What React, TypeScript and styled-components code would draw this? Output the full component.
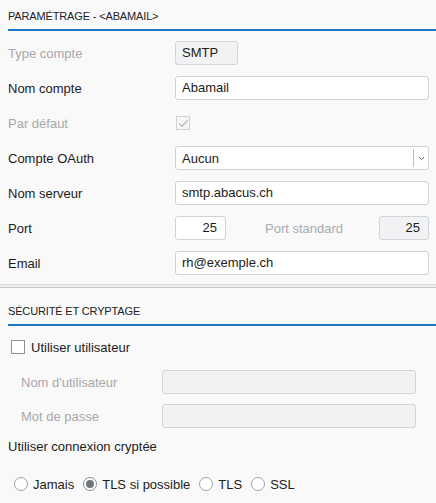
import React from "react";
import styled, { createGlobalStyle } from "styled-components";

const Global = createGlobalStyle`
  html, body { margin: 0; padding: 0; background: #f9f9f9; }
  body {
    font-family: "Liberation Sans", Arial, sans-serif;
    font-size: 13px;
    color: #1c1c1c;
  }
  * { box-sizing: border-box; }
`;

const Page = styled.div`
  width: 436px;
  height: 503px;
  overflow: hidden;
  background: #f9f9f9;
`;

const SectionHeader = styled.div<{ $top: number }>`
  margin-left: 8px;
  padding-top: ${(p) => p.$top}px;
  padding-bottom: 6px;
  height: ${(p) => p.$top + 21}px;
  line-height: 13px;
  font-size: 11px;
  letter-spacing: -0.15px;
  text-transform: uppercase;
  color: #222;
  border-bottom: 2px solid #1f76c6;
`;

const Form = styled.div`
  display: flex;
  flex-direction: column;
  gap: 11px;
  padding: 10px 7px 9px 8px;
`;

const Row = styled.div<{ $labelWidth?: number }>`
  display: grid;
  grid-template-columns: ${(p) => p.$labelWidth ?? 167}px 1fr;
  align-items: center;
  height: 24px;
`;

const Label = styled.span<{ $muted?: boolean }>`
  color: ${(p) => (p.$muted ? "#a8a8a8" : "#1c1c1c")};
  white-space: nowrap;
`;

const Field = styled.div<{ $width?: number; $disabled?: boolean; $right?: boolean }>`
  height: 24px;
  width: ${(p) => (p.$width ? `${p.$width}px` : "100%")};
  border: 1px solid ${(p) => (p.$disabled ? "#d3d5d8" : "#d2d2d2")};
  border-radius: 3px;
  background: ${(p) => (p.$disabled ? "#f1f2f3" : "#ffffff")};
  padding: 0 8px 0 6px;
  line-height: 22px;
  color: #1c1c1c;
  text-align: ${(p) => (p.$right ? "right" : "left")};
  white-space: nowrap;
  overflow: hidden;
`;

const SelectBox = styled.div`
  height: 24px;
  width: 100%;
  border: 1px solid #d2d2d2;
  border-radius: 3px;
  background: #fff;
  display: flex;
  align-items: center;
  padding-left: 6px;
`;

const SelectText = styled.span`
  flex: 1;
`;

const SelectDivider = styled.span`
  width: 1px;
  height: 18px;
  background: #bdbdbd;
`;

const SelectArrow = styled.span`
  width: 14px;
  display: flex;
  align-items: center;
  justify-content: center;
`;

const PortGroup = styled.div`
  display: flex;
  align-items: center;
`;

const PortStd = styled.span`
  color: #a6acb3;
  margin-left: 39px;
  flex: 1;
`;

const Check = styled.span<{ $disabled?: boolean }>`
  width: 14px;
  height: 14px;
  border: 1px solid ${(p) => (p.$disabled ? "#d2d2d2" : "#8c9198")};
  background: ${(p) => (p.$disabled ? "#f6f6f6" : "#ffffff")};
  display: inline-flex;
  align-items: center;
  justify-content: center;
  flex: none;
`;

const CheckCell = styled.div`
  display: flex;
  align-items: center;
  padding-left: 1px;
`;

const Divider = styled.div`
  height: 4px;
  border-top: 1px solid #dadada;
  border-bottom: 1px solid #c6c6c6;
  background: #efefef;
`;

const CheckRow = styled.label`
  display: flex;
  align-items: center;
  gap: 6px;
  height: 18px;
  margin: 12px 0 0 11px;
`;

const SubForm = styled.div`
  display: flex;
  flex-direction: column;
  gap: 10px;
  padding: 14px 20px 0 21px;
`;

const PlainText = styled.div`
  margin: 11px 0 0 8px;
  height: 16px;
  line-height: 16px;
`;

const RadioGroup = styled.div`
  display: flex;
  align-items: center;
  height: 18px;
  margin: 20px 0 0 14px;
  gap: 9px;
`;

const RadioItem = styled.label`
  display: flex;
  align-items: center;
  gap: 5px;
`;

const Radio = styled.span<{ $checked?: boolean }>`
  width: 14px;
  height: 14px;
  border-radius: 50%;
  border: 1px solid ${(p) => (p.$checked ? "#8a9099" : "#9da2a8")};
  background: #fff;
  display: inline-flex;
  align-items: center;
  justify-content: center;
  flex: none;
  &::after {
    content: "";
    display: ${(p) => (p.$checked ? "block" : "none")};
    width: 8px;
    height: 8px;
    border-radius: 50%;
    background: #6f757d;
  }
`;

const Chevron = () => (
  <svg width="7" height="5" viewBox="0 0 7 5">
    <path d="M1 1.2 L3.5 3.6 L6 1.2" fill="none" stroke="#555" strokeWidth="1" />
  </svg>
);

const Tick = () => (
  <svg width="11" height="9" viewBox="0 0 11 9">
    <path d="M1.2 4.6 L4 7.3 L9.8 1.4" fill="none" stroke="#b9b9b9" strokeWidth="1.3" />
  </svg>
);

export default function App() {
  return (
    <Page>
      <Global />
      <SectionHeader $top={10}>Paramétrage - &lt;Abamail&gt;</SectionHeader>
      <Form>
        <Row>
          <Label $muted>Type compte</Label>
          <Field $width={63} $disabled>SMTP</Field>
        </Row>
        <Row>
          <Label>Nom compte</Label>
          <Field>Abamail</Field>
        </Row>
        <Row>
          <Label $muted>Par défaut</Label>
          <CheckCell>
            <Check $disabled>
              <Tick />
            </Check>
          </CheckCell>
        </Row>
        <Row>
          <Label>Compte OAuth</Label>
          <SelectBox>
            <SelectText>Aucun</SelectText>
            <SelectDivider />
            <SelectArrow>
              <Chevron />
            </SelectArrow>
          </SelectBox>
        </Row>
        <Row>
          <Label>Nom serveur</Label>
          <Field>smtp.abacus.ch</Field>
        </Row>
        <Row>
          <Label>Port</Label>
          <PortGroup>
            <Field $width={51} $right>25</Field>
            <PortStd>Port standard</PortStd>
            <Field $width={50} $disabled $right>25</Field>
          </PortGroup>
        </Row>
        <Row>
          <Label>Email</Label>
          <Field>rh@exemple.ch</Field>
        </Row>
      </Form>
      <Divider />
      <SectionHeader $top={17}>Sécurité et cryptage</SectionHeader>
      <CheckRow>
        <Check />
        <span>Utiliser utilisateur</span>
      </CheckRow>
      <SubForm>
        <Row $labelWidth={141}>
          <Label $muted>Nom d'utilisateur</Label>
          <Field $disabled />
        </Row>
        <Row $labelWidth={141}>
          <Label $muted>Mot de passe</Label>
          <Field $disabled />
        </Row>
      </SubForm>
      <PlainText>Utiliser connexion cryptée</PlainText>
      <RadioGroup>
        <RadioItem>
          <Radio />
          <span>Jamais</span>
        </RadioItem>
        <RadioItem>
          <Radio $checked />
          <span>TLS si possible</span>
        </RadioItem>
        <RadioItem>
          <Radio />
          <span>TLS</span>
        </RadioItem>
        <RadioItem>
          <Radio />
          <span>SSL</span>
        </RadioItem>
      </RadioGroup>
    </Page>
  );
}
